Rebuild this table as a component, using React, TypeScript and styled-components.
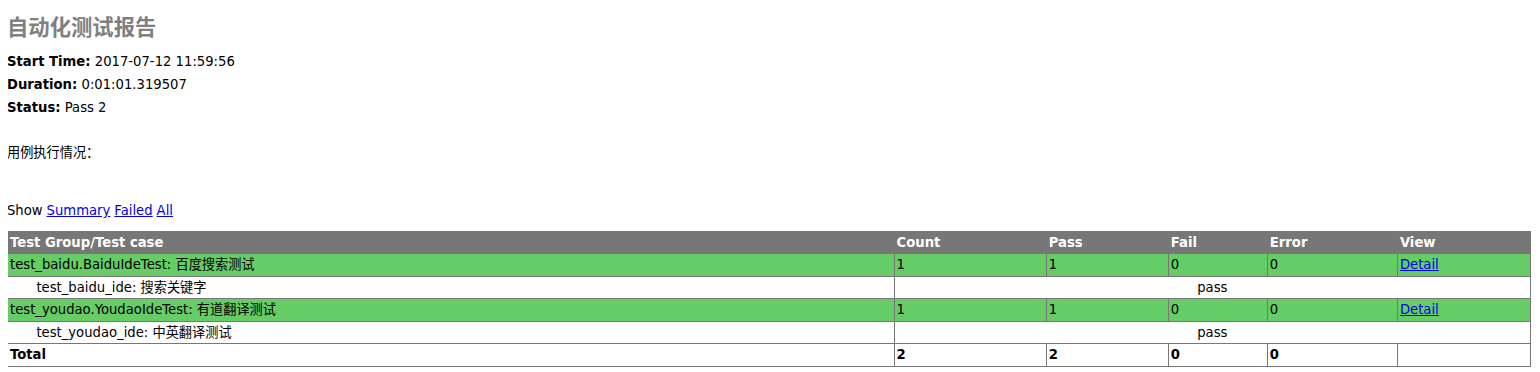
import React from "react";
import styled, { createGlobalStyle } from "styled-components";

const GlobalStyle = createGlobalStyle`
  html, body {
    background: #ffffff;
  }
  body {
    margin: 8px;
    font-family: "DejaVu Sans", Verdana, "Noto Sans CJK SC", sans-serif;
    font-size: 13.2px;
    color: #000000;
  }
`;

const Heading = styled.div`
  margin: 0 0 1ex 0;
`;

const Title = styled.h1`
  font-size: 16pt;
  color: gray;
  margin: 5px 0 15px -1px;
  line-height: 26px;
  font-family: "Noto Sans CJK SC", sans-serif;
  font-weight: 700;
`;

const Attribute = styled.p`
  margin: 7px 0 0 -1px;
  line-height: 16px;
`;

const Label = styled.strong`
  font-weight: 700;
`;

const Description = styled.p`
  margin: 29px 0 42px -1px;
  line-height: 16px;
`;

const ShowLine = styled.div`
  margin: 0 0 12px -1px;
  line-height: 16px;
`;

const ShowLink = styled.a`
  color: #0000ee;
  text-decoration: underline;
  cursor: pointer;
  margin-left: 4px;
`;

const ResultTable = styled.table`
  width: 100%;
  margin-left: -1px;
  border-collapse: collapse;
  border: 1px solid #777;
  font-size: 100%;
  table-layout: fixed;
`;

const HeaderRow = styled.tr`
  font-weight: bold;
  color: white;
  background-color: #777;
`;

const Row = styled.tr<{ $kind?: "pass" | "case" | "total" }>`
  background-color: ${(p) => (p.$kind === "pass" ? "#66cc66" : "#ffffff")};
  font-weight: ${(p) => (p.$kind === "total" ? "bold" : "normal")};
`;

const Cell = styled.td<{ $center?: boolean }>`
  border: 1px solid #777;
  padding: 2px;
  line-height: 17.6px;
  text-align: ${(p) => (p.$center ? "center" : "left")};
  vertical-align: middle;
  white-space: nowrap;
  overflow: hidden;
`;

const HeadCell = styled(Cell)`
  line-height: 17px;
`;

const CaseName = styled.div`
  margin-left: 2em;
`;

const DetailLink = styled.a`
  color: #0000ee;
  text-decoration: underline;
  cursor: pointer;
`;

type Group = {
  name: string;
  count: number;
  pass: number;
  fail: number;
  error: number;
  caseName: string;
  result: string;
};

const groups: Group[] = [
  {
    name: "test_baidu.BaiduIdeTest: 百度搜索测试",
    count: 1,
    pass: 1,
    fail: 0,
    error: 0,
    caseName: "test_baidu_ide: 搜索关键字",
    result: "pass",
  },
  {
    name: "test_youdao.YoudaoIdeTest: 有道翻译测试",
    count: 1,
    pass: 1,
    fail: 0,
    error: 0,
    caseName: "test_youdao_ide: 中英翻译测试",
    result: "pass",
  },
];

export default function App() {
  return (
    <>
      <GlobalStyle />
      <Heading>
        <Title>自动化测试报告</Title>
        <Attribute>
          <Label>Start Time:</Label> 2017-07-12 11:59:56
        </Attribute>
        <Attribute>
          <Label>Duration:</Label> 0:01:01.319507
        </Attribute>
        <Attribute>
          <Label>Status:</Label> Pass 2
        </Attribute>
        <Description>用例执行情况：</Description>
      </Heading>
      <ShowLine>
        Show
        <ShowLink>Summary</ShowLink>
        <ShowLink>Failed</ShowLink>
        <ShowLink>All</ShowLink>
      </ShowLine>
      <ResultTable>
        <colgroup>
          <col style={{ width: 886 }} />
          <col style={{ width: 152 }} />
          <col style={{ width: 122 }} />
          <col style={{ width: 99 }} />
          <col style={{ width: 130 }} />
          <col style={{ width: 133 }} />
        </colgroup>
        <tbody>
          <HeaderRow>
            <HeadCell>Test Group/Test case</HeadCell>
            <HeadCell>Count</HeadCell>
            <HeadCell>Pass</HeadCell>
            <HeadCell>Fail</HeadCell>
            <HeadCell>Error</HeadCell>
            <HeadCell>View</HeadCell>
          </HeaderRow>
          {groups.map((g) => (
            <React.Fragment key={g.name}>
              <Row $kind="pass">
                <Cell>{g.name}</Cell>
                <Cell>{g.count}</Cell>
                <Cell>{g.pass}</Cell>
                <Cell>{g.fail}</Cell>
                <Cell>{g.error}</Cell>
                <Cell>
                  <DetailLink>Detail</DetailLink>
                </Cell>
              </Row>
              <Row $kind="case">
                <Cell>
                  <CaseName>{g.caseName}</CaseName>
                </Cell>
                <Cell colSpan={5} $center>
                  {g.result}
                </Cell>
              </Row>
            </React.Fragment>
          ))}
          <Row $kind="total">
            <Cell>Total</Cell>
            <Cell>2</Cell>
            <Cell>2</Cell>
            <Cell>0</Cell>
            <Cell>0</Cell>
            <Cell>&nbsp;</Cell>
          </Row>
        </tbody>
      </ResultTable>
    </>
  );
}
